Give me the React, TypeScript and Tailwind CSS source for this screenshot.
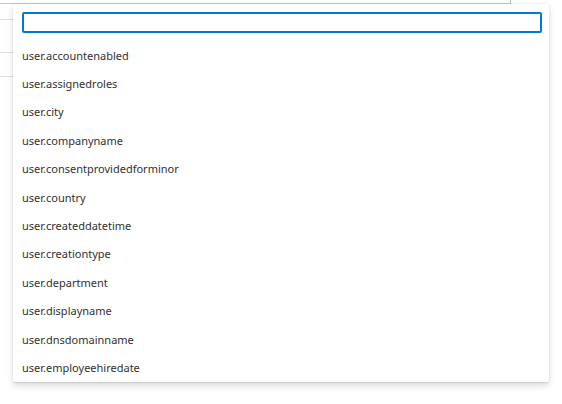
import React from 'react';

const fields = [
  'user.accountenabled',
  'user.assignedroles',
  'user.city',
  'user.companyname',
  'user.consentprovidedforminor',
  'user.country',
  'user.createddatetime',
  'user.creationtype',
  'user.department',
  'user.displayname',
  'user.dnsdomainname',
  'user.employeehiredate',
];

const App: React.FC = () => {
  return (
    <div className="relative w-[562px] h-[404px] overflow-hidden bg-white font-['Noto_Sans',sans-serif] text-[#323130]">
      {/* field + table behind the dropdown */}
      <div className="h-[4px] w-[511px] border-b border-r border-[#c8c6c4]" />
      <div className="w-[14px]">
        <div className="h-[16px] border-b border-[#e1dfdd]" />
        <div className="h-[33px] border-b border-[#e1dfdd]" />
        <div className="h-[24px] border-b border-[#e1dfdd]" />
      </div>

      {/* dropdown callout */}
      <div className="absolute left-[13px] top-[4px] w-[536px] h-[378px] bg-white rounded-[2px] shadow-[0_3.2px_7.2px_rgba(0,0,0,0.132),0_0.6px_1.8px_rgba(0,0,0,0.108)]">
        <div className="pl-[9px] pt-[8px]">
          <input
            className="block w-[520px] h-[21px] rounded-[2px] border-2 border-[#0078d4] bg-white px-[6px] text-[11px] outline-none"
            defaultValue=""
          />
        </div>
        <div className="mt-[8px]">
          {fields.map((f) => (
            <div key={f} className="flex items-center h-[28.4px] px-[9px] text-[11px] leading-none">
              {f}
            </div>
          ))}
        </div>
      </div>
    </div>
  );
};

export default App;
